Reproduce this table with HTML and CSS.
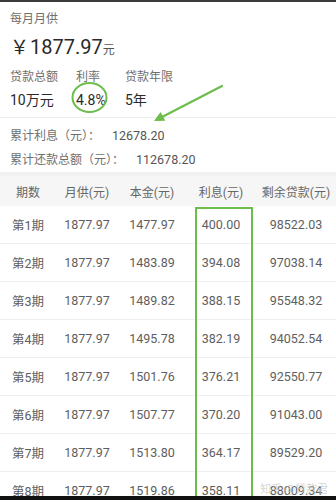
FILE: index.html
```html
<!DOCTYPE html>
<html lang="zh-CN">
<head>
<meta charset="utf-8">
<title>每月月供</title>
<link rel="stylesheet" href="styles.css">
</head>
<body>
<div class="page">
  <div class="topbar"></div>
  <section class="summary">
    <div class="label">每月月供</div>
    <div class="amount"><span class="yen">￥</span>1877.97<span class="unit">元</span></div>
    <div class="facts">
      <div class="label">贷款总额</div>
      <div class="label">利率</div>
      <div class="label">贷款年限</div>
      <div class="value">10万元</div>
      <div class="value">4.8%</div>
      <div class="value">5年</div>
    </div>
  </section>
  <section class="totals">
    <div class="line"><span class="tlabel">累计利息（元）：</span><span class="num">12678.20</span></div>
    <div class="line"><span class="tlabel">累计还款总额（元）：</span><span class="num">112678.20</span></div>
  </section>
  <div class="table">
    <div class="row head"><span>期数</span><span>月供(元)</span><span>本金(元)</span><span>利息(元)</span><span>剩余贷款(元)</span></div>
    <div class="row"><span>第1期</span><span>1877.97</span><span>1477.97</span><span>400.00</span><span>98522.03</span></div>
    <div class="row"><span>第2期</span><span>1877.97</span><span>1483.89</span><span>394.08</span><span>97038.14</span></div>
    <div class="row"><span>第3期</span><span>1877.97</span><span>1489.82</span><span>388.15</span><span>95548.32</span></div>
    <div class="row"><span>第4期</span><span>1877.97</span><span>1495.78</span><span>382.19</span><span>94052.54</span></div>
    <div class="row"><span>第5期</span><span>1877.97</span><span>1501.76</span><span>376.21</span><span>92550.77</span></div>
    <div class="row"><span>第6期</span><span>1877.97</span><span>1507.77</span><span>370.20</span><span>91043.00</span></div>
    <div class="row"><span>第7期</span><span>1877.97</span><span>1513.80</span><span>364.17</span><span>89529.20</span></div>
    <div class="row"><span>第8期</span><span>1877.97</span><span>1519.86</span><span>358.11</span><span>88009.34</span></div>
  </div>

  <div class="highlight-box"></div>
  <svg class="annot" width="336" height="500" viewBox="0 0 336 500">
    <ellipse cx="89.5" cy="97.5" rx="17" ry="14.5" fill="none" stroke="#6cbd4c" stroke-width="2"/>
    <line x1="222" y1="86" x2="163" y2="116.4" stroke="#6cbd4c" stroke-width="2.2" stroke-linecap="round"/>
    <polygon points="154,121 165.3,120.8 160.6,111.9" fill="#6cbd4c"/>
  </svg>
  <div class="watermark">知乎 @贷款君</div>
  <div class="bottombar"></div>
</div>
</body>
</html>
```
FILE: styles.css
```css
html, body {
  margin: 0;
  padding: 0;
  background: #ffffff;
}
.page {
  position: relative;
  width: 336px;
  height: 500px;
  overflow: hidden;
  font-family: Roboto, "Noto Sans CJK SC", sans-serif;
  color: #333;
}
.topbar {
  height: 2px;
  background: #3a3a3a;
}
.summary {
  padding: 9px 10px 8px;
  border-bottom: 1px solid #ededed;
}
.label {
  font-size: 12px;
  line-height: 16px;
  color: #6f6f6f;
}
.amount {
  margin-top: 6px;
  font-size: 20px;
  line-height: 26px;
  color: #2a2a2a;
}
.yen {
  font-family: "Noto Sans CJK SC", sans-serif;
  font-size: 19px;
  margin-right: 1px;
}
.unit {
  font-family: "Noto Sans CJK SC", sans-serif;
  font-size: 12px;
  color: #555;
}
.facts {
  margin-top: 7px;
  display: grid;
  grid-template-columns: 66px 49px auto;
  row-gap: 6px;
}
.value {
  font-size: 14px;
  line-height: 18px;
  color: #2a2a2a;
}
.totals {
  padding: 9px 10px 3px;
}
.line {
  font-size: 12px;
  line-height: 18px;
  color: #6f6f6f;
  margin-bottom: 6px;
}
.line:last-child {
  margin-bottom: 0;
}
.num {
  color: #555;
  font-size: 12.5px;
  margin-left: 12px;
}
.table {
  border-top: 4px solid #f1f1f1;
}
.row {
  display: grid;
  grid-template-columns: 56px 62px 68px 70px 80px;
  height: 37px;
  align-items: center;
  border-bottom: 1px solid #efefef;
  font-size: 12.5px;
  color: #5e5e5e;
}
.row span {
  text-align: center;
}
.row.head {
  height: 30px;
  background: #f6f6f6;
  border-bottom: none;
  font-size: 12px;
  color: #666;
}
.highlight-box {
  position: absolute;
  left: 195px;
  top: 207px;
  width: 54px;
  height: 287px;
  border: 2px solid #6cbd4c;
}
.annot {
  position: absolute;
  left: 0;
  top: 0;
  pointer-events: none;
}
.watermark {
  position: absolute;
  right: 8px;
  bottom: 5px;
  font-size: 11px;
  line-height: 13px;
  color: rgba(200, 200, 200, 0.75);
  font-family: "Noto Sans CJK SC", sans-serif;
}
.bottombar {
  position: absolute;
  left: 0;
  bottom: 0;
  width: 336px;
  height: 4px;
  background: #111;
}
```
